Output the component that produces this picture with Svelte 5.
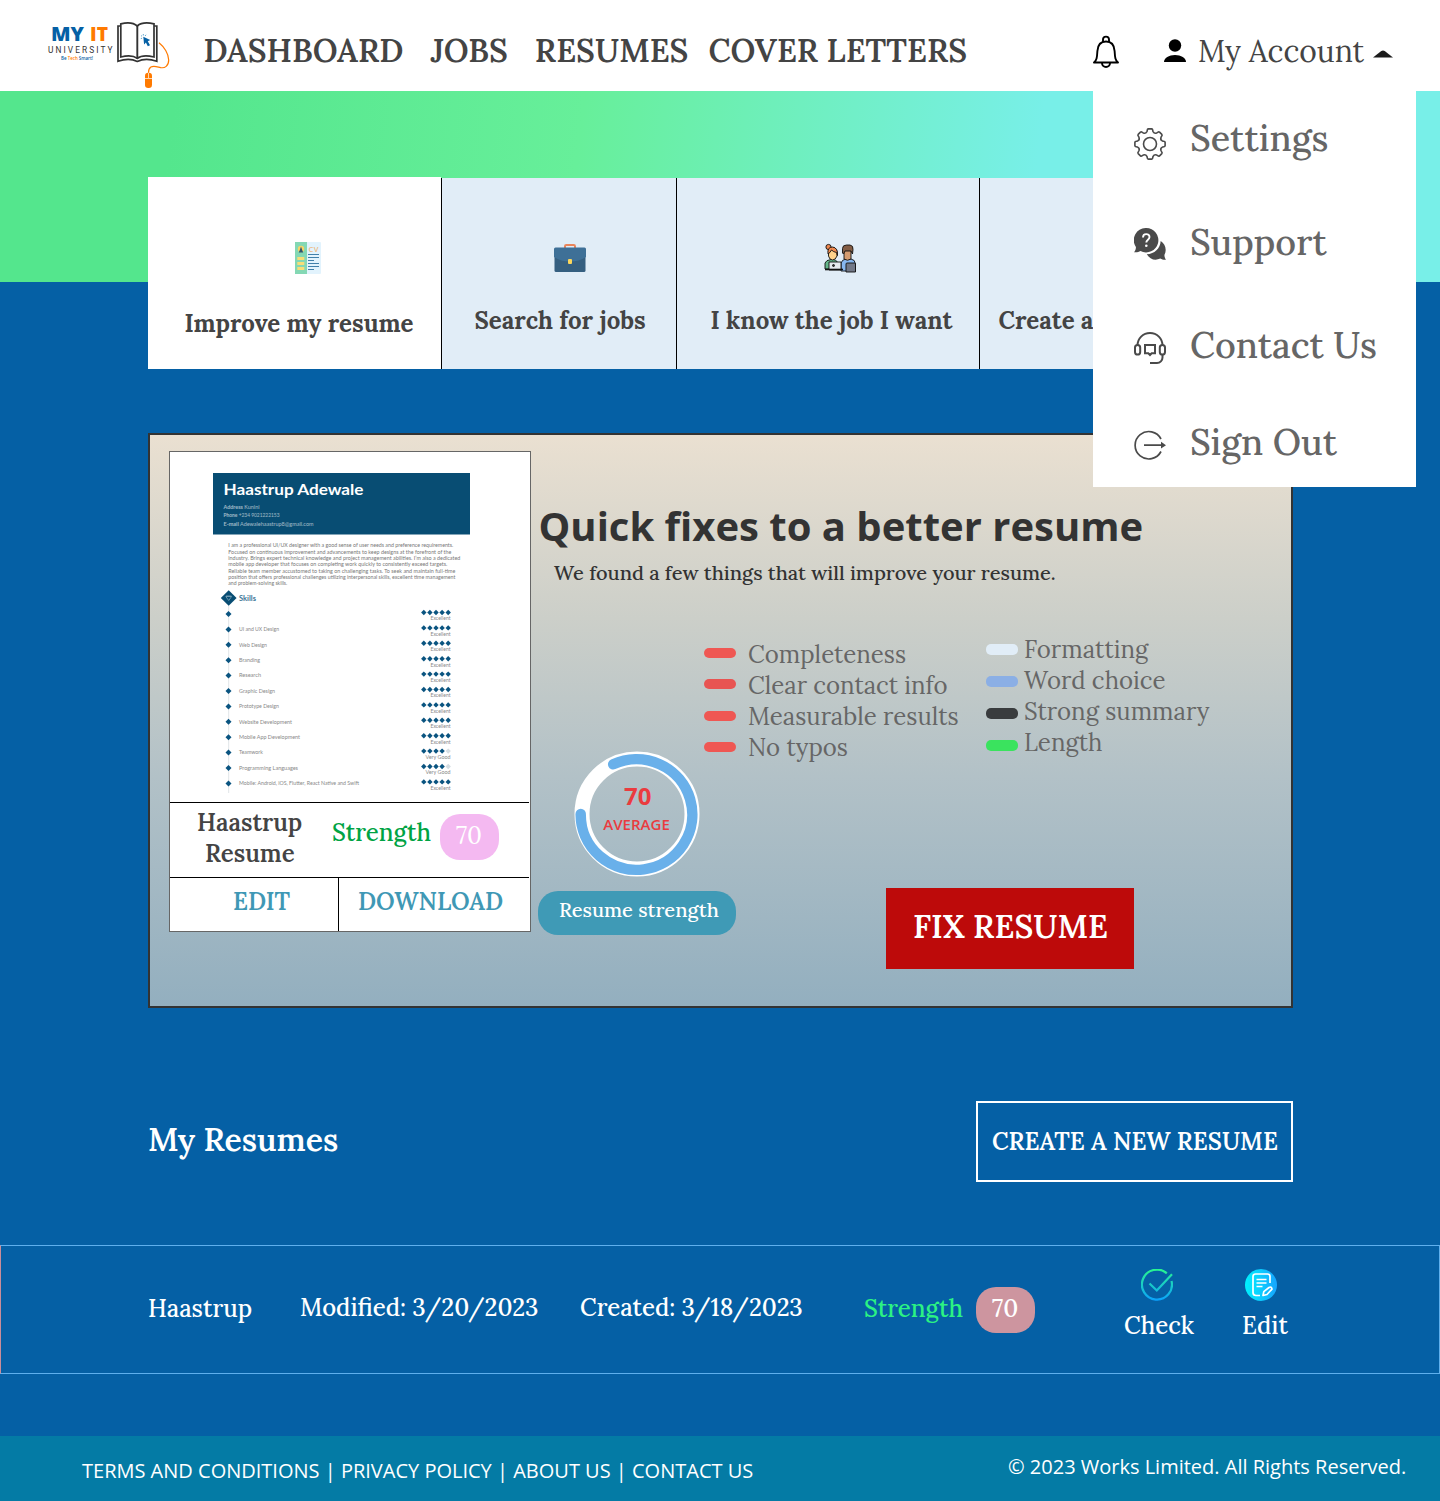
<script>
  const nav = ['DASHBOARD', 'JOBS', 'RESUMES', 'COVER LETTERS'];
  const weak = ['Completeness', 'Clear contact info', 'Measurable results', 'No typos'];
  const other = ['Formatting', 'Word choice', 'Strong summary', 'Length'];

  const summary = [
    ['I am a professional UI/UX designer with a good sense of user needs and preference requirements.', 225],
    ['Focused on continuous improvement and advancements to keep designs at the forefront of the', 223],
    ['industry. Brings expert technical knowledge and project management abilities. I’m also a dedicated', 232],
    ['mobile app developer that focuses on completing work quickly to consistently exceed targets.', 219],
    ['Reliable team member accustomed to taking on challenging tasks. To seek and maintain full-time', 227],
    ['position that offers professional challenges utilizing interpersonal skills, excellent time management', 227],
    ['and problem-solving skills.', 59]
  ];
  const skills = [
    ['', 0, 5], ['UI and UX Design', 40, 5], ['Web Design', 28, 5], ['Branding', 21, 5], ['Research', 22, 5],
    ['Graphic Design', 36, 5], ['Prototype Design', 40, 5], ['Website Development', 53, 5],
    ['Mobile App Development', 61, 5], ['Teamwork', 24, 4], ['Programming Languages', 59, 4],
    ['Mobile: Android, iOS, Flutter, React Native and Swift', 120, 5]
  ];

  const polar = (r, deg) => {
    const a = (deg * Math.PI) / 180;
    return `${(16 + r * Math.sin(a)).toFixed(2)} ${(16 - r * Math.cos(a)).toFixed(2)}`;
  };
  let gear = '';
  for (let k = 0; k < 8; k++) {
    const a = k * 45;
    gear += `${k ? 'L' : 'M'}${polar(12.8, a - 14)} Q${polar(13.4, a - 12)} ${polar(14.2, a - 11)} Q${polar(15.2, a - 10)} ${polar(15.2, a - 6)} L${polar(15.2, a + 6)} Q${polar(15.2, a + 10)} ${polar(14.2, a + 11)} Q${polar(13.4, a + 12)} ${polar(12.8, a + 14)} Q${polar(11, a + 22.5)} ${polar(12.8, a + 31)} `;
  }
  gear += 'Z';
</script>

<div class="page">
  <header>
    <svg class="logo" width="124" height="72" viewBox="47 18 124 72">
      <text x="51" y="41" textLength="33" lengthAdjust="spacingAndGlyphs" class="brand blue">MY</text>
      <text x="90" y="41" textLength="18" lengthAdjust="spacingAndGlyphs" class="brand orange">IT</text>
      <text x="48" y="52.8" textLength="64.5" class="uni">UNIVERSITY</text>
      <text x="61" y="60" textLength="32" lengthAdjust="spacingAndGlyphs" class="slogan blue">Be <tspan class="orange">Tech</tspan> Smart!</text>
      <g fill="none" stroke="#333" stroke-width="1.7">
        <path d="M120.5 26H118v35.200c7-2.400 14-2.400 19.300.2 5.500-2.600 12.500-2.600 19.500-.2V26H154" />
        <path d="M137.300 26c-3.500-3.200-10.500-3.600-16.500-2.200V57c6-1.500 13-1.300 16.500 1.400 3.500-2.700 10.500-2.900 16.700-1.400V23.800c-6.200-1.400-13.200-1-16.700 2.200Z" />
        <path d="M137.300 26v33" stroke-width="1.900" />
      </g>
      <path d="M143.300 36.800l6.900 3.200-2.400 1.300 2.200 3.900-2.200 1-1.900-3.600-1.800 2Z" fill="#0560a5" />
      <path d="M141 35.500l1 .8M143.300 34v1.500M146 34.800l-1 1.200M140.800 38.600l1.300-.4" stroke="#3a8fc0" stroke-width=".8" />
      <path d="M159 42.700c5 4 9.700 11 9.700 17.300 0 6-4 8.400-8 7.600-4-.9-7-2.200-9.800-.6-2 1.200-2.400 3-2.400 5.700" fill="none" stroke="#ff7a00" stroke-width="1.200" />
      <rect x="145" y="72.700" width="7" height="15.300" rx="3.200" fill="#ff7a00" />
      <path d="M145 78.500h7M148.500 73v5" stroke="#fff" stroke-width=".7" />
    </svg>
    <nav>
      {#each nav as label}
        <a href="#top"><span class="t xl semi">{label}</span></a>
      {/each}
    </nav>
    <svg class="bell" width="28" height="34" viewBox="0 0 28 34">
      <g fill="none" stroke="#000" stroke-width="1.900" stroke-linejoin="round">
        <path d="M2 27.500h24c-2.700-2.400-3-4.600-3.400-11.500C22.200 9.500 18.700 6.500 14 6.500S5.800 9.500 5.400 16C5 22.900 4.700 25.100 2 27.500Z" />
        <path d="M11 7V4.600a3 3 0 0 1 6 0V7M10 28a4 4 0 0 0 8 0" />
      </g>
    </svg>
    <svg class="person" width="22" height="24" viewBox="0 0 22 24">
      <circle cx="11" cy="6.500" r="6.200" />
      <path d="M0 23c0-4 5-7 11-7s11 3 11 7Z" />
    </svg>
    <span class="account t">My Account</span>
    <svg class="caret" width="20" height="8" viewBox="0 0 20 8"><path d="M0 7.500 8.300 1Q10 0 11.700 1L20 7.500Z" fill="#1b1b1b" /></svg>
  </header>

  <div class="menu">
    <a href="#settings">
      <svg width="32" height="32" viewBox="0 0 32 32" fill="none" stroke="#4a4a4a" stroke-width="1.600">
        <path d={gear} stroke-linejoin="round" /><circle cx="16" cy="16" r="6.500" />
      </svg>
      <span class="t xxl">Settings</span>
    </a>
    <a href="#support">
      <svg width="32" height="32" viewBox="0 0 32 32">
        <path d="M12.300 0a12.200 12.200 0 1 1-5.800 23C4.500 24.300 2.300 24.500 0 24.200c1.300-1.600 2-3.100 1.900-5.200A12.200 12.200 0 0 1 12.300 0Z" fill="#4a4a4a" />
        <path d="M26.700 13c4.500 2.800 6.500 8.800 3.700 14 0 1.800.6 3.300 1.600 4.800-2.200.2-4-.1-5.700-1.200-5.300 2.500-10.600.6-13.500-4.400C20.500 26 26.200 20.500 26.700 13Z" fill="#4a4a4a" />
        <path d="M9 9.400c0-4.300 6.500-4.300 6.500-.3 0 2.700-3.200 2.600-3.200 5.500" fill="none" stroke="#fff" stroke-width="1.900" />
        <circle cx="12.300" cy="17.800" r="1.300" fill="#fff" />
      </svg>
      <span class="t xxl">Support</span>
    </a>
    <a href="#contact">
      <svg width="32" height="32" viewBox="0 0 32 32" fill="none" stroke="#4a4a4a" stroke-width="2">
        <path d="M3.500 13.500C3.500 6.500 9 1 16 1s12.500 5.500 12.500 12.500M28.500 22v3.500a5.500 5.500 0 0 1-5.500 5.500h-7" />
        <rect x="1" y="13" width="5.200" height="9.500" rx="2.600" /><rect x="25.800" y="13" width="5.200" height="9.500" rx="2.600" />
        <path d="M11 13h10v8.200h-3.300L16 23l-1.700-1.800H11Z" />
      </svg>
      <span class="t xxl">Contact Us</span>
    </a>
    <a href="#signout">
      <svg width="32" height="32" viewBox="0 0 32 32" fill="none" stroke="#4a4a4a" stroke-width="1.700">
        <path d="M27 9A13.700 13.700 0 1 0 27 21.500M10 15.200h18" /><path d="M27 11.800 32 15.200 27 18.600Z" fill="#4a4a4a" stroke="none" />
      </svg>
      <span class="t xxl">Sign Out</span>
    </a>
  </div>

  <section class="hero">
    <div class="tabs">
      <div class="tab active">
        <svg width="32" height="32" viewBox="0 0 32 32">
          <path d="M3 0h12v32H3Z" fill="#84d8b4" /><path d="M15 0h13q1 0 1 1v30q0 1-1 1H15Z" fill="#e2f3fd" />
          <circle cx="9" cy="7" r="3.200" fill="#f8d568" /><path d="M9 4.500l1 3 1.200 3h-4.400l1.200-3Z" fill="#2f5570" />
          <path d="M5.300 15h7v3h-7zM5.300 20h7v3h-7zM5.300 25h7v3h-7z" fill="#f7de78" />
          <path d="M16 12.500h11M16 15.500h11M16 18.500h6M16 21.500h11M16 24.500h11M16 27.500h6" stroke="#4180aa" stroke-width="1" />
          <text x="16.500" y="9.500" textLength="10" class="cv">CV</text>
        </svg>
        <span class="t md bold">Improve my resume</span>
      </div>
      <div class="tab two">
        <svg width="32" height="32" viewBox="0 0 32 32">
          <path d="M11 6V4.300q0-1.300 1.300-1.300h7.400q1.300 0 1.300 1.300V6" fill="none" stroke="#ea855b" stroke-width="2" />
          <rect x="0.500" y="10" width="31" height="20" rx="1.500" fill="#355f80" />
          <path d="M1.500 5.500h29q1.500 0 1.500 1.500v8q-7 4.500-16 4.500T0 15V7q0-1.500 1.500-1.500Z" fill="#3e7097" />
          <rect x="14" y="17" width="4" height="5" rx="1" fill="#fbd65b" />
        </svg>
        <span class="t md bold">Search for jobs</span>
      </div>
      <div class="tab three">
        <svg width="32" height="32" viewBox="0 0 32 32" stroke="#111" stroke-width=".9" stroke-linejoin="round">
          <path d="M1 27v-6q1-3 6-3.500t7 3.500v6Z" fill="#64b68a" />
          <circle cx="4.500" cy="5" r="2.600" fill="#ed8750" />
          <path d="M4.500 10q0-4.500 4-4.500t4.500 4.500v4q-1.500 4-4.500 4t-4-4Z" fill="#ffd38c" />
          <path d="M4 12q-1-7 4.500-7 5.500.5 5 8.500l-1-3q-3-.5-5-2.500-1.500 3-3.500 4Z" fill="#f08a50" />
          <path d="M17 29v-8q1-3.500 5-4h5q4 .5 4.500 5v7Z" fill="#87b7ef" />
          <path d="M20 8h7v9q-3.500 2.500-7 0Z" fill="#d59c70" />
          <path d="M18.500 11V6.500Q18.500 3 22.500 3h3.500q3.500 .5 3 4.500l-.5 4.500-1.500-3H21l-1.500 3Z" fill="#835d45" />
          <path d="M5 20h12v8H5Z" fill="#e6e9ee" /><circle cx="9.500" cy="23.500" r="1" fill="#333" />
          <path d="M1 27.500h18" stroke-width="1.600" />
          <path d="M22 22q0-1 1-1h7.500q1 0 1 1v8H22Z" fill="#727887" />
        </svg>
        <span class="t md bold">I know the job I want</span>
      </div>
      <div class="tab four">
        <span class="t md bold">Create a cover letter</span>
      </div>
    </div>
  </section>

  <main>
    <section class="card">
      <article class="preview">
        <div class="thumb">
          <svg width="257" height="329" viewBox="213 473 257 329">
            <rect x="213" y="473" width="257" height="61.500" fill="#084d73" />
            <g fill="#fff">
              <text x="223.500" y="494.500" textLength="140" lengthAdjust="spacingAndGlyphs" class="name">Haastrup Adewale</text>
              <g class="tiny">
                <text x="223.500" y="508.500" textLength="36" opacity=".6" lengthAdjust="spacingAndGlyphs"><tspan class="strong">Address</tspan> Kunini</text>
                <text x="223.500" y="517.300" textLength="56" opacity=".6" lengthAdjust="spacingAndGlyphs"><tspan class="strong">Phone</tspan> +234 9021222153</text>
                <text x="223.500" y="525.800" textLength="90" opacity=".6" lengthAdjust="spacingAndGlyphs"><tspan class="strong">E-mail</tspan> Adewalehaastrup8@gmail.com</text>
              </g>
            </g>
            <g class="tiny" fill="#777">
              {#each summary as [line, w], i}
                <text x="228.300" y={547.300 + i * 6.300} textLength={w} lengthAdjust="spacingAndGlyphs">{line}</text>
              {/each}
            </g>
            <path d="M228.700 604v189" stroke="#e1e5e8" stroke-width="1" />
            <path d="M228.700 590.300l7.900 7.700-7.900 7.700-7.900-7.700Z" fill="#084d73" />
            <path d="M225.800 596.500l2.900 4 2.900-4ZM226 596h5.400" fill="none" stroke="#7fa5ba" stroke-width=".8" />
            <text x="239" y="600.500" textLength="17" lengthAdjust="spacingAndGlyphs" class="skills">Skills</text>
            {#each skills as [name, w, score], i}
              {@const y = 614 + i * 15.400}
              <path d={`M228.500 ${y - 3}l3 3-3 3-3-3Z`} fill="#0a5480" />
              {#if name}
                <text x="239" y={y + 1.700} textLength={w} lengthAdjust="spacingAndGlyphs" class="tiny" fill="#888">{name}</text>
              {/if}
              {#each [0, 1, 2, 3, 4] as n}
                <path d={`M${423.800 + n * 6.100} ${y - 4.200}l2.700 2.700-2.700 2.700-2.700-2.700Z`} fill={n < score ? '#0a5480' : '#d5dde2'} />
              {/each}
              <text x={score === 5 ? 430.500 : 425.500} y={y + 6.400} textLength={score === 5 ? 20 : 25} lengthAdjust="spacingAndGlyphs" class="tiny" fill="#888">{score === 5 ? 'Excellent' : 'Very Good'}</text>
            {/each}
          </svg>
        </div>
        <div class="meta">
          <div class="title"><span class="t md semi">Haastrup</span><span class="t md semi">Resume</span></div>
          <span class="strength"><span class="t md medium">Strength</span></span>
          <span class="badge"><span class="t md">70</span></span>
        </div>
        <div class="actions">
          <a href="#edit"><span class="t md semi">EDIT</span></a>
          <a href="#download"><span class="t md semi">DOWNLOAD</span></a>
        </div>
      </article>

      <div class="fixes">
        <h1>Quick fixes to a better resume</h1>
        <p><span class="t sm">We found a few things that will improve your resume.</span></p>
        <div class="legend">
          <div class="keys red"><i></i><i></i><i></i><i></i></div>
          <ul class="weak">{#each weak as l}<li><span class="t md">{l}</span></li>{/each}</ul>
          <div class="keys mixed"><i></i><i></i><i></i><i></i></div>
          <ul>{#each other as l}<li><span class="t md">{l}</span></li>{/each}</ul>
        </div>
        <div class="bottom">
          <div class="score">
            <svg width="126" height="126" viewBox="573.500 751 126 126">
              <circle cx="636.500" cy="814" r="55" fill="none" stroke="#fff" stroke-width="15" />
              <path d="M612.700 764.300A55.800 55.300 0 1 1 580.200 814" fill="none" stroke="#69b0ea" stroke-width="10.500" stroke-linecap="round" />
              <text x="637.200" y="804.700" text-anchor="middle" class="num">70</text>
              <text x="602.800" y="830" textLength="66.500" lengthAdjust="spacingAndGlyphs" class="avg">AVERAGE</text>
            </svg>
            <span class="chip"><span class="t sm">Resume strength</span></span>
          </div>
          <button class="fix"><span class="t xl semi">FIX RESUME</span></button>
        </div>
      </div>
    </section>

    <section class="heading">
      <h2><span class="t xl semi">My Resumes</span></h2>
      <button class="create"><span class="t md semi">CREATE A NEW RESUME</span></button>
    </section>
  </main>

  <section class="row">
    <span class="who"><span class="t md medium">Haastrup</span></span>
    <span class="modified"><span class="t md medium">Modified: 3/20/2023</span></span>
    <span class="created"><span class="t md medium">Created: 3/18/2023</span></span>
    <span class="str"><span class="t md medium">Strength</span></span>
    <span class="badge dusty"><span class="t md medium">70</span></span>
    <a class="check" href="#check">
      <svg width="32" height="32" viewBox="0 0 32 32">
        <defs><linearGradient id="g1" x1="0" y1="0" x2="0" y2="32" gradientUnits="userSpaceOnUse"><stop stop-color="#28f68e" /><stop offset="1" stop-color="#0aa0ff" /></linearGradient></defs>
        <path d="M25.800 4.300A15 15 0 1 0 30.500 12M8.500 14.500l7.300 7L31 5.300" fill="none" stroke="url(#g1)" stroke-width="2.200" />
      </svg>
      <span class="t md medium">Check</span>
    </a>
    <a class="edit" href="#edit-row">
      <svg width="32" height="32" viewBox="0 0 32 32">
        <defs><linearGradient id="g2" x1="0" y1="0" x2="32" y2="0" gradientUnits="userSpaceOnUse"><stop stop-color="#00f2fe" /><stop offset="1" stop-color="#17a4ff" /></linearGradient></defs>
        <circle cx="16" cy="16" r="16" fill="url(#g2)" />
        <g fill="none" stroke="#fff" stroke-width="1.700" stroke-linejoin="round">
          <path d="M25 14V7.500Q25 5 22.500 5h-12Q8 5 8 7.500v16Q8 26.500 11 26.500h4M11.500 10.500h10M11.500 14h10M11.500 17.500h6" />
          <path d="M18 26.500l.8-3.800 5.200-4.200q2.600-1.200 3 1.600l-5 5.400Z" />
        </g>
      </svg>
      <span class="t md medium">Edit</span>
    </a>
  </section>

  <footer>
    <span class="links">TERMS AND CONDITIONS | PRIVACY POLICY | ABOUT US | CONTACT US</span>
    <span class="copy">© 2023 Works Limited. All Rights Reserved.</span>
  </footer>
</div>

<style>
  :global(body) { margin: 0; }
  .page, .page * { box-sizing: border-box; }
  .page {
    position: relative; width: 1440px; height: 1501px; overflow: hidden;
    display: flex; flex-direction: column;
    background: #0560a5; color: #444;
    font-family: Lora, 'Liberation Serif', serif;
  }
  a { color: inherit; text-decoration: none; }
  h1, h2, p, ul { margin: 0; padding: 0; font-weight: 400; list-style: none; }
  button { border: 0; padding: 0; font-family: inherit; color: inherit; background: none; display: flex; }
  svg { display: block; flex: none; }

  .t { flex: none; white-space: nowrap; }
  .sm { font-size: 20px; line-height: 28px; font-weight: 500; }
  .md { font-size: 24px; line-height: 32px; }
  .xl { font-size: 32px; line-height: 40px; }
  .xxl { font-size: 36px; line-height: 48px; font-weight: 500; }
  .medium { font-weight: 500; }
  .semi { font-weight: 600; }
  .bold { font-weight: 700; }

  header { display: flex; align-items: flex-start; height: 91px; flex: none; background: #fff; padding-left: 47px; }
  .logo { margin-top: 18px; }
  .brand { font: 800 19px 'Open Sans', sans-serif; }
  .uni { font: 400 8.300px Roboto, sans-serif; fill: #333; }
  .slogan { font: 600 5.200px 'Open Sans', sans-serif; }
  .blue { fill: #0560a5; }
  .orange { fill: #ff7a00; }
  nav { display: flex; margin: 31px 0 0 32.400px; width: 888.600px; }
  nav a { display: flex; margin-right: 27px; }
  nav a:nth-child(3) { margin-right: 20px; }
  .bell { margin: 35px 0 0 0; }
  .person { margin: 39px 0 0 44px; }
  .account { width: 166px; margin: 31px 0 0 12px; font-size: 30px; line-height: 40px; }
  .caret { margin: 50px 0 0 9px; }

  .menu { position: absolute; z-index: 2; left: 1093px; top: 91px; width: 323px; height: 396px; padding: 23px 0 0 41px; background: #fff; color: #666; }
  .menu a { display: flex; gap: 24px; height: 48px; margin-bottom: 56px; }
  .menu svg { margin-top: 14px; }
  .menu a:nth-child(2) { margin-bottom: 55px; }
  .menu a:nth-child(2) svg { margin-top: 10px; }
  .menu a:nth-child(3) { margin-bottom: 49px; }
  .menu a:nth-child(3) svg { margin-top: 11px; }
  .menu a:nth-child(4) svg { margin-top: 12px; }

  .hero { height: 191px; flex: none; padding: 86px 147px 0 148px; background: linear-gradient(97deg, #54e68d 0%, #54e68d 12%, #67ef9a 40%, #78efe8 71.5%, #78efe8 100%); }
  .tabs { display: flex; height: 192px; align-items: flex-end; }
  .tab { height: 191px; padding-top: 64px; background: #e1edf7; border-left: 1px solid #000; display: flex; flex-direction: column; align-items: flex-start; }
  .tab .t { margin-top: 31px; }
  .active { width: 293px; height: 192px; padding: 65px 0 0 36.500px; background: #fff; border: 0; }
  .active svg { margin-left: 107.500px; }
  .active .t { margin-top: 34px; }
  .two { width: 235px; padding-left: 32.500px; }
  .two svg { margin-left: 79.500px; }
  .three { width: 303px; padding-left: 33.500px; }
  .three svg { margin-left: 113.500px; }
  .four { width: 314px; padding: 96px 0 0 18.500px; }
  .cv { font: 600 7.500px 'Open Sans', sans-serif; fill: #edb980; }

  main { padding: 151px 147px 0 148px; height: 963px; flex: none; }
  .card { display: flex; align-items: flex-start; height: 575px; border: 2px solid #333; padding: 16px 0 0 19px; background: linear-gradient(#eae0d1 0%, #cccfc9 32%, #b2c1c7 60%, #93afbf 100%); }
  .preview { width: 362px; height: 481px; border: 1px solid #666; background: #fff; flex: none; }
  .thumb { height: 351px; padding: 21px 0 0 43px; border-bottom: 1px solid #000; margin-right: 1px; }
  .name { font: 700 15px Lato, sans-serif; }
  .tiny { font-family: Lato, sans-serif; font-size: 5.200px; }
  .strong { font-weight: 700; }
  .skills { font: 700 7px Lato, sans-serif; fill: #3c7594; }
  .meta { display: flex; align-items: flex-start; height: 75px; padding-left: 27px; border-bottom: 1px solid #000; margin-right: 1px; }
  .title { display: flex; flex-direction: column; align-items: flex-start; width: 135px; padding-top: 4px; }
  .title .t { line-height: 31px; }
  .title .t + .t { margin-left: 8px; }
  .strength { display: flex; width: 108px; padding-top: 14px; color: #00a344; }
  .badge { display: flex; width: 59px; height: 46px; padding: 6px 0 0 16px; border-radius: 20px; background: #f4b9f1; color: #fff; margin-top: 11px; }
  .actions { display: flex; height: 53px; color: #3f98b5; }
  .actions a { display: flex; width: 169px; padding: 8px 0 0 63px; border-right: 1px solid #000; }
  .actions a + a { width: 190px; padding-left: 19px; border: 0; }

  .fixes { width: 760px; flex: none; }
  h1 { display: flex; white-space: nowrap; font: 700 40px/56px 'Open Sans', sans-serif; color: #333; margin: 47px 0 0 7.500px; }
  p { display: flex; margin: 5px 0 0 23px; color: #333; }
  .legend { display: flex; align-items: flex-start; height: 129px; margin: 47px 0 0 173px; color: #666; }
  .keys { display: flex; flex-direction: column; width: 32px; }
  .keys i { height: 10px; border-radius: 5px; background: #ef5753; margin-bottom: 21px; }
  .red { margin: 14px 12px 0 0; }
  .red i:nth-child(2) { background: #e85452; margin-bottom: 22px; }
  .mixed { margin: 10px 6px 0 0; }
  .mixed i { height: 11px; background: #e1edf7; }
  .mixed i:nth-child(2) { background: #8bafe5; }
  .mixed i:nth-child(3) { background: #393c3e; }
  .mixed i:nth-child(4) { background: #3ae35e; }
  .weak { width: 238px; padding-top: 5px; }
  li { display: flex; height: 31px; }
  li .t { line-height: 31px; }
  .bottom { display: flex; margin: -12px 0 0 7px; }
  .score { width: 348px; }
  .score svg { margin-left: 35.500px; }
  .num { font: 700 24px 'Open Sans', sans-serif; fill: #ea3b3f; }
  .avg { font: 600 14.500px 'Open Sans', sans-serif; fill: #ea3b3f; }
  .chip { display: flex; width: 198px; height: 44px; margin-top: 14px; padding: 5px 0 0 21px; border-radius: 20px; background: #3f9ab6; color: #fff; }
  .fix { width: 248px; height: 81px; margin-top: 137px; padding: 19px 0 0 27px; background: #bd0a0a; color: #fff; }

  .heading { display: flex; justify-content: space-between; margin-top: 93px; color: #fff; }
  h2 { display: flex; padding-top: 19px; }
  .create { width: 317px; height: 81px; border: 2px solid #fff; padding: 23px 0 0 14px; }

  .row { display: flex; align-items: flex-start; height: 129px; flex: none; border: 1px solid #5fb0ee; border-left-color: #c98d99; padding-left: 147px; color: #fff; }
  .who { display: flex; width: 152px; padding-top: 47px; }
  .modified { display: flex; width: 280px; padding-top: 46px; }
  .created { display: flex; width: 284px; padding-top: 46px; }
  .str { display: flex; width: 112px; padding-top: 47px; color: #2cf283; }
  .dusty { background: #cd959f; margin-top: 41px; }
  .row a { display: flex; flex-direction: column; align-items: flex-start; padding-top: 23px; gap: 9px; }
  .check { width: 118px; margin-left: 89px; }
  .check svg { margin-left: 17px; }
  .edit svg { margin-left: 3px; }

  footer { display: flex; height: 65px; margin-top: 62px; flex: none; white-space: nowrap; background: #047ba5; color: #fff; font: 400 20px/28px 'Open Sans', sans-serif; padding-left: 82px; }
  .links { width: 926px; padding-top: 21px; }
  .copy { padding-top: 17px; }
</style>
